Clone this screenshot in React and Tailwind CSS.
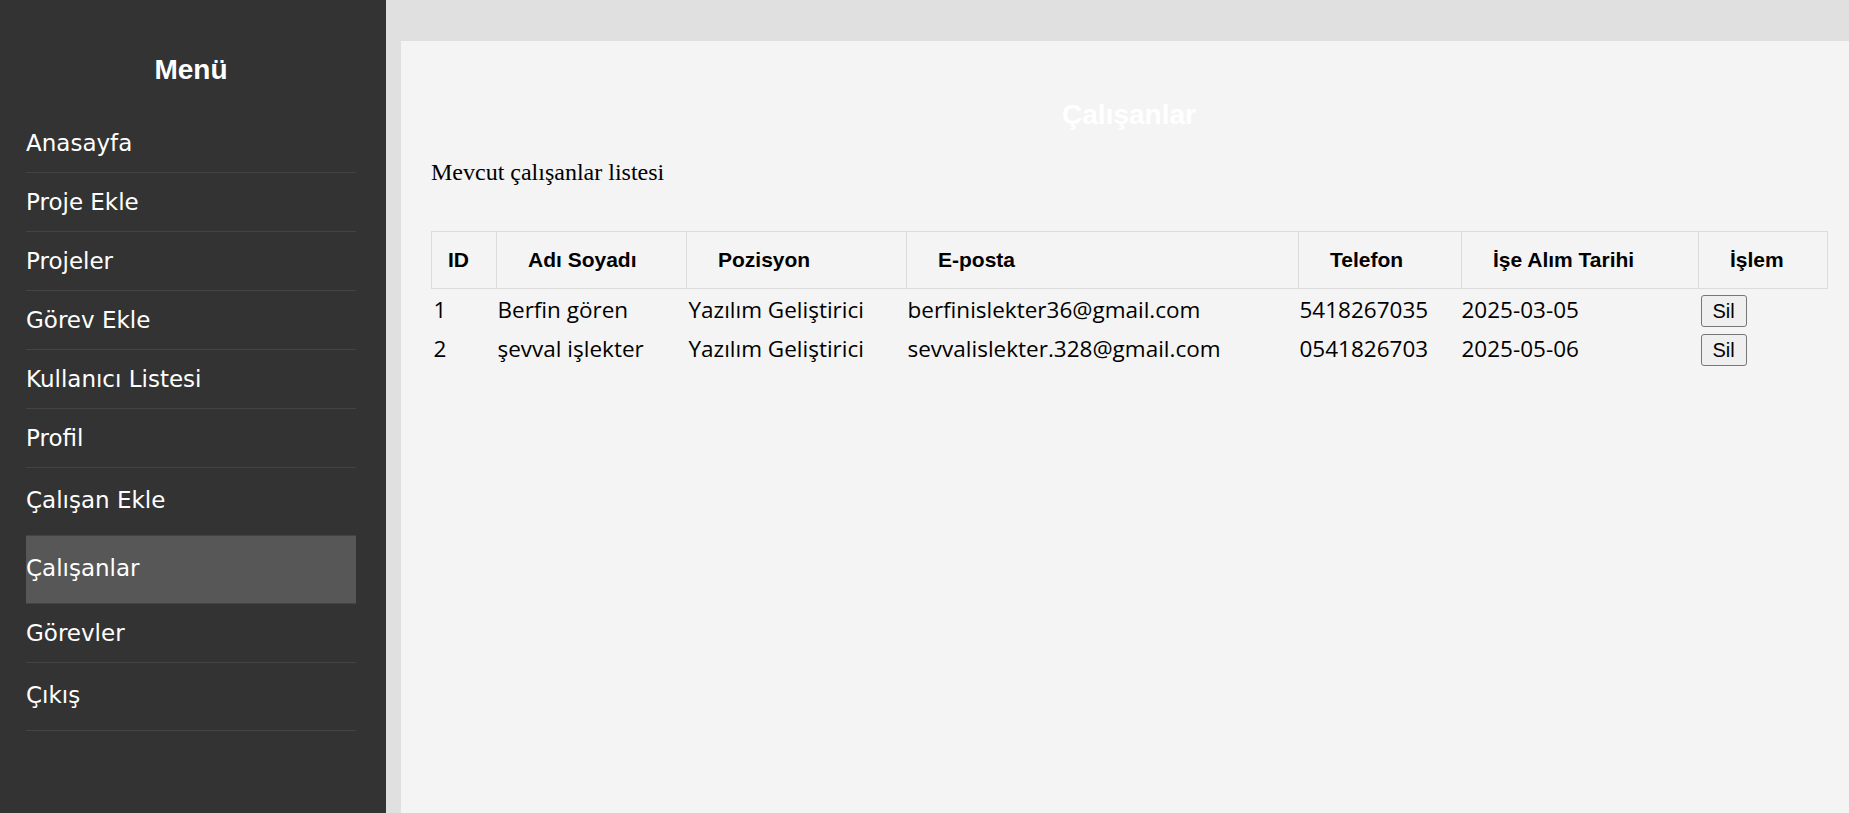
import React from 'react';

const menuItems = [
  { label: 'Anasayfa' },
  { label: 'Proje Ekle' },
  { label: 'Projeler' },
  { label: 'Görev Ekle' },
  { label: 'Kullanıcı Listesi' },
  { label: 'Profil' },
  { label: 'Çalışan Ekle', tall: true },
  { label: 'Çalışanlar', tall: true, active: true },
  { label: 'Görevler' },
  { label: 'Çıkış', tall: true },
];

const employees = [
  { id: 1, name: 'Berfin gören', position: 'Yazılım Geliştirici', email: 'berfinislekter36@gmail.com', phone: '5418267035', date: '2025-03-05' },
  { id: 2, name: 'şevval işlekter', position: 'Yazılım Geliştirici', email: 'sevvalislekter.328@gmail.com', phone: '0541826703', date: '2025-05-06' },
];

const headers = ['ID', 'Adı Soyadı', 'Pozisyon', 'E-posta', 'Telefon', 'İşe Alım Tarihi', 'İşlem'];
const widths = ['w-[65px]', 'w-[190px]', 'w-[220px]', 'w-[392px]', 'w-[163px]', 'w-[237px]', 'w-[129px]'];

export default function App() {
  return (
    <div className="flex w-[1849px] h-[813px] overflow-hidden">
      {/* Sidebar */}
      <aside className="w-[386px] shrink-0 bg-[#333333] pl-[26px] pr-[30px] pt-[54px] text-white">
        <h3 className="text-center font-['Liberation_Sans',Arial,sans-serif] font-bold text-[28px] leading-[32px]">Menü</h3>
        <ul className="mt-[28px] font-['DejaVu_Sans',Verdana,sans-serif] text-[23px] leading-[26px]">
          {menuItems.map((item) => (
            <li
              key={item.label}
              className={`border-b border-[#444444] ${item.tall ? 'h-[68px] pt-[19px]' : 'h-[59px] pt-[16px]'} ${item.active ? 'bg-[#575757]' : ''}`}
            >
              {item.label}
            </li>
          ))}
        </ul>
      </aside>

      {/* Main */}
      <main className="flex-1 min-w-0 flex flex-col bg-[#e0e0e0] pl-[15px] pt-[41px]">
        <div className="flex-1 w-[1456px] shrink-0 bg-[#f4f4f4] px-[30px] pt-[58px]">
          <h3 className="text-center text-white font-['Liberation_Sans',Arial,sans-serif] font-bold text-[28px] leading-[32px]">Çalışanlar</h3>
          <p className="mt-[27px] font-['Liberation_Serif','Times_New_Roman',serif] text-[24px] leading-[28px] text-black">Mevcut çalışanlar listesi</p>

          <table className="mt-[45px] w-[1396px] table-fixed border-collapse">
            <colgroup>
              {widths.map((w, i) => <col key={i} className={w} />)}
            </colgroup>
            <thead>
              <tr className="h-[57px]">
                {headers.map((h, i) => (
                  <th
                    key={h}
                    className={`border border-[#dcdcdc] text-left font-['Liberation_Sans',Arial,sans-serif] font-bold text-[21px] text-black ${i === 0 ? 'pl-[16px]' : 'pl-[31px]'}`}
                  >
                    {h}
                  </th>
                ))}
              </tr>
            </thead>
            <tbody className="font-['Open_Sans','Noto_Sans',sans-serif] text-[22.5px] leading-[30px] text-black">
              {employees.map((e) => (
                <tr key={e.id} className="h-[39px]">
                  <td className="align-top pt-[6px] pl-[2px]">{e.id}</td>
                  <td className="align-top pt-[6px] pl-[1px]">{e.name}</td>
                  <td className="align-top pt-[6px] pl-[2px]">{e.position}</td>
                  <td className="align-top pt-[6px] pl-[1px]">{e.email}</td>
                  <td className="align-top pt-[6px] pl-[1px]">{e.phone}</td>
                  <td className="align-top pt-[6px] pl-[0px]">{e.date}</td>
                  <td className="align-top pt-[6px] pl-[2px]">
                    <button className="flex items-center justify-center w-[46px] h-[32px] bg-[#efefef] border-[1.5px] border-[#767676] rounded-[3px] font-['Liberation_Sans',Arial,sans-serif] text-[20px] leading-none text-black">
                      Sil
                    </button>
                  </td>
                </tr>
              ))}
            </tbody>
          </table>
        </div>
      </main>
    </div>
  );
}
